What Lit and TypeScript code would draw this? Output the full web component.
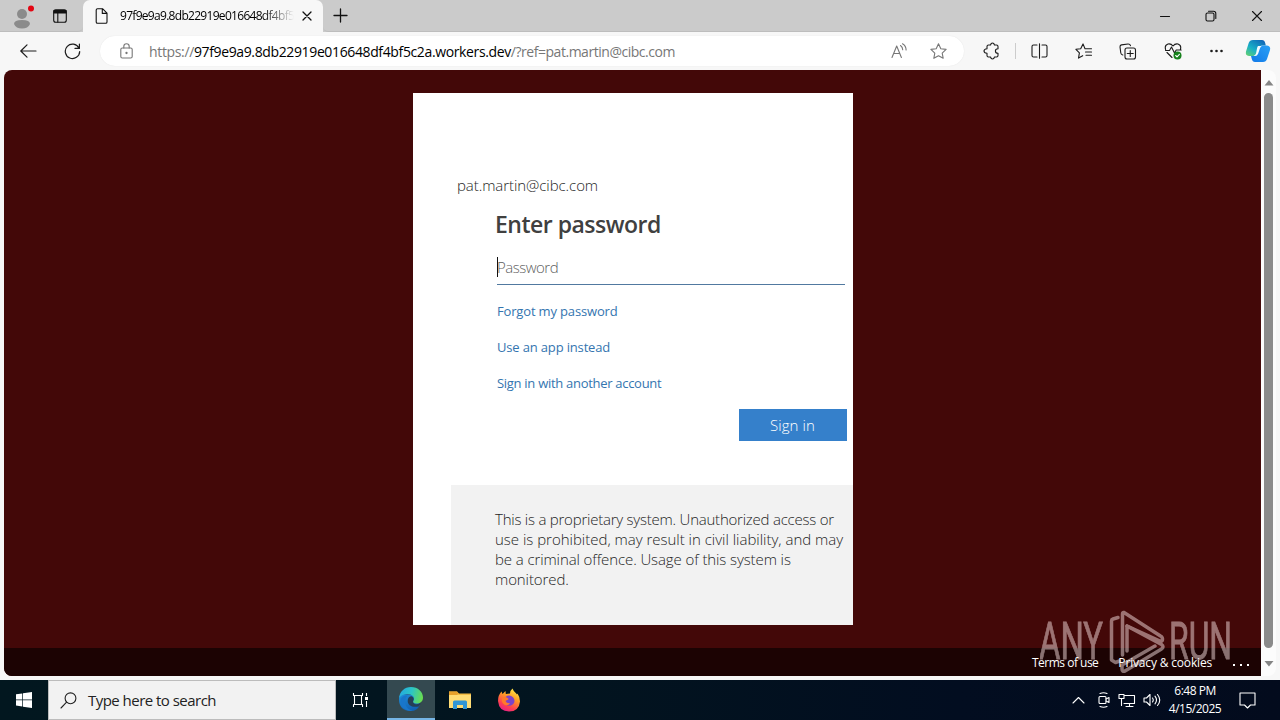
import { LitElement, html, css, svg } from "lit";
import { customElement } from "lit/decorators.js";

const icon = (w: number, h: number, body: unknown, cls = "") =>
  html`<svg class="ico ${cls}" width=${w} height=${h} viewBox="0 0 ${w} ${h}">${body}</svg>`;

const shared = css`
  * { box-sizing: border-box; }
  svg { display: block; flex: none; }
  .ico { fill: none; stroke: currentColor; stroke-width: 1.1; stroke-linecap: round; stroke-linejoin: round; }
`;

@customElement("browser-tabs")
class BrowserTabs extends LitElement {
  static styles = [shared, css`
    :host { display: flex; height: 32px; background: #cbcbcb; color: #111; }
    .left { width: 83px; display: flex; align-items: center; padding-left: 12px; gap: 17px; border-bottom: 1px solid #bdbdbd; border-radius: 0 0 5px 0; }
    .tab { width: 240px; display: flex; align-items: center; background: #f7f7f7; border-radius: 7px 7px 0 0; padding-left: 12px; }
    .title { margin-left: 12px; width: 174px; overflow: hidden; white-space: nowrap; font-size: 12px; line-height: 18px; padding-bottom: 1px; letter-spacing: -0.7px; color: #000;
      -webkit-mask-image: linear-gradient(90deg, #000 82%, transparent); mask-image: linear-gradient(90deg, #000 82%, transparent); }
    .close { margin-left: 8px; }
    .rest { flex: 1; display: flex; align-items: center; padding-left: 10px; border-bottom: 1px solid #bdbdbd; border-radius: 0 0 0 5px; }
    .window { margin-left: auto; display: flex; align-items: center; gap: 34px; padding-right: 17px; }
  `];
  render() {
    return html`
      <div class="left">
        ${icon(24, 28, svg`<circle cx="10" cy="12" r="5" fill="#8b8b8b" stroke="none"/><path d="M2 22q0-4 8-4t8 4q-2 4.500-8 4.500T2 22z" fill="#8b8b8b" stroke="none"/><circle cx="19" cy="6.500" r="3" fill="#e30613" stroke="none"/>`)}
        ${icon(15, 14, svg`<rect x=".7" y=".7" width="12.600" height="12.600" rx="2"/><path d="M1 1.500h12v2.500H1z" fill="currentColor"/><path d="M4.800 4v9"/>`)}
      </div>
      <div class="tab">
        ${icon(13, 16, svg`<path d="M2.500 .7h5L12 5.200V14q0 1.300-1.300 1.300H2.500Q1.200 15.300 1.200 14V2Q1.200 .7 2.500 .7zM7.300 1v4.400H12"/>`)}
        <span class="title">97f9e9a9.8db22919e016648df4bf5c2a</span>
        <span class="close">${icon(10, 10, svg`<path d="M1 1l8 8M9 1l-8 8" stroke-width="1.300"/>`)}</span>
      </div>
      <div class="rest">
        ${icon(15, 15, svg`<path d="M7.500 1v13M1 7.500h13" stroke-width="1.300"/>`)}
        <div class="window">
          ${icon(12, 12, svg`<path d="M1.500 6.500h9"/>`)}
          ${icon(12, 12, svg`<rect x="1" y="3" width="8" height="8" rx="1.500"/><path d="M3.500 1.200h5q2.300 0 2.300 2.300v5"/>`)}
          ${icon(12, 12, svg`<path d="M1.500 1.500l9 9M10.500 1.500l-9 9"/>`)}
        </div>
      </div>`;
  }
}

@customElement("browser-toolbar")
class BrowserToolbar extends LitElement {
  static styles = [shared, css`
    :host { display: flex; align-items: center; height: 38px; background: #f7f7f7; color: #1c1c1c; padding-left: 20px; }
    .reload { margin-left: 27px; }
    .address { margin-left: 19px; width: 864px; height: 30px; border-radius: 15px; background: #fff; display: flex; align-items: center; padding: 0 17px 0 20px; color: #777; box-shadow: 0 0 1px #ddd; }
    .url { margin-left: 16px; font-size: 14px; white-space: nowrap; letter-spacing: -0.35px; }
    .url b { font-weight: 400; color: #000; letter-spacing: -0.37px; }
    .query { letter-spacing: -0.47px; }
    .tools { margin-left: auto; display: flex; gap: 22px; }
    .actions { margin-left: 19px; display: flex; align-items: center; }
    .sep { width: 1px; height: 16px; background: #ccc; margin: 0 15px 0 14px; }
    .group { display: flex; gap: 26.500px; align-items: center; }
    .copilot { margin-left: 21px; }
  `];
  render() {
    return html`
      ${icon(17, 14, svg`<path d="M7 .8L.8 7 7 13.200M1 7h15" stroke-width="1.200"/>`)}
      ${icon(17, 17, svg`<path d="M15 5.200A7.200 7.200 0 1 0 15.700 8.500M15.400 1v4.400H11" stroke-width="1.200"/>`, "reload")}
      <div class="address">
        ${icon(13, 16, svg`<rect x=".8" y="5" width="11.400" height="10" rx="1.500"/><path d="M3.800 5V3.500a2.700 2.700 0 0 1 5.400 0V5"/><circle cx="6.500" cy="10" r=".6" fill="currentColor"/>`)}
        <span class="url">https://<b>97f9e9a9.8db22919e016648df4bf5c2a.workers.dev</b><span class="query">/?ref=pat.martin@cibc.com</span></span>
        <div class="tools">
          ${icon(17, 16, svg`<path d="M1 14.500L5.700 3l4.700 11.500M2.800 10.500h6M9.500 2.500q2.200 1.500 2.200 4.300M11.500 .8q3.600 2.200 3.600 6.200"/>`)}
          ${icon(17, 16, svg`<path d="M8.500 .8l2.300 4.900 5.300.7-3.900 3.700 1 5.200-4.700-2.600-4.700 2.600 1-5.200L.9 6.400l5.300-.7z"/>`)}
        </div>
      </div>
      <div class="actions">
        ${icon(18, 18, svg`<path d="M5.500 3h2Q8 1 9.500 1T11.500 3h2q1.500 0 1.500 1.500v2.200q-2.600 0-2.600 2.300T15 11.300v2.200q0 1.500-1.500 1.500h-2Q11 17 9.500 17T7.500 15h-2Q4 15 4 13.500v-2.200Q1 11 1 9t3-2.300V4.500Q4 3 5.500 3z"/>`)}
        <span class="sep"></span>
        <div class="group">
          ${icon(17, 16, svg`<path d="M6 2H2.500Q1 2 1 3.500v9Q1 14 2.500 14H6M11 2h3.500Q16 2 16 3.500v9q0 1.500-1.500 1.500H11M8.500 .8v14.400"/>`)}
          ${icon(18, 16, svg`<path d="M10 5.700L8 .9 5.700 5.700.9 6.300l3.500 3.600-.9 5.200 4.200-2.400M10 5.700h6.500M10.500 9h6M11 12.300h5.500"/>`)}
          ${icon(18, 17, svg`<rect x="6" y="5" width="10.500" height="11" rx="2"/><path d="M11.250 7.500v6M8.250 10.500h6M3.800 12Q2 11.500 1.800 10L1 4Q.9 2.200 2.500 1.900L9 1q2-.1 2.500 1.700"/>`)}
          ${icon(19, 18, svg`<path d="M1.600 7.500Q.3 3.200 4 2q3-.6 5 2 2-2.600 5-2 3.700 1.200 2.400 5.500M1.500 8.500h4L7.500 5l3 6 1.700-3h5M3 10.500l5 5"/><circle cx="13.500" cy="13.500" r="4" fill="#16811c" stroke="none"/><path d="M11.700 13.500l1.300 1.300 2.400-2.500" stroke="#fff"/>`)}
          ${icon(15, 16, svg`<g fill="currentColor" stroke="none"><circle cx="2.500" cy="8" r="1.300"/><circle cx="7.500" cy="8" r="1.300"/><circle cx="12.500" cy="8" r="1.300"/></g>`)}
        </div>
        <svg class="copilot" width="26" height="24" viewBox="0 0 26 24">
          <defs>
            <linearGradient id="a" x1="0" y1="1" x2=".8" y2="0"><stop stop-color="#69d36b"/><stop offset=".45" stop-color="#19afc7"/><stop offset="1" stop-color="#1167b7"/></linearGradient>
            <linearGradient id="b" x1="0" y1="1" x2="1" y2="0"><stop stop-color="#1279e8"/><stop offset="1" stop-color="#29a0f5"/></linearGradient>
          </defs>
          <path d="M8 1h9q2.500 0 3.200 3l.6 2.500h-4q-2.300 0-3 2.500l-1.700 5.500Q11 17 8.500 17H4q-4-.5-3-4.500L3.700 4Q4.700 1 8 1z" fill="url(#a)"/>
          <path d="M18 23H10q-2.500 0-3.200-3L6 17h3q2.300 0 3-2.500L13.700 9q1-2.500 3.300-2.500h5q4 .5 3 4.500L22 20q-1 3-4 3z" fill="url(#b)"/>
          <path d="M13 7h3.700q-1.400 1-2 3l-1.500 4.500q-.8 2.500-3.500 2.500H8.500q1.900-.6 2.500-2.500l1-5q.3-1.700 1-2.500z" fill="#f4fbff"/>
        </svg>
      </div>`;
  }
}

@customElement("sign-in-page")
class SignInPage extends LitElement {
  static styles = [shared, css`
    :host { display: flex; flex: 1; height: 610px; background: #f7f7f7; padding: 0 4px 4px; }
    .view { position: relative; width: 1257px; height: 606px; background: #430808; border-radius: 8px 0 0 8px; overflow: hidden; display: flex; flex-direction: column; padding-top: 23px; }
    .card { width: 440px; height: 532px; margin-left: 409px; background: #fff; color: #404040; font-size: 15px; padding-top: 82px; display: flex; flex-direction: column; white-space: nowrap; }
    .user { margin-left: 44px; line-height: 20px; letter-spacing: -0.07px; font-weight: 300; color: #1e1e1e; }
    h1 { margin: 14px 0 0 82px; font-size: 23px; line-height: 30px; font-weight: 600; letter-spacing: -0.5px; color: #404040; }
    .field { margin: 13px 8px 0 84px; height: 33px; border-bottom: 1px solid #5179a0; display: flex; align-items: center; padding-bottom: 3px; color: #606060; font-weight: 300; letter-spacing: -0.5px; }
    .caret { width: 1px; height: 20px; background: #111; margin-right: -1px; }
    .links { display: flex; flex-direction: column; margin: 16px 0 0 84px; gap: 16px; font-size: 13px; line-height: 20px; color: #3475af; letter-spacing: -0.16px; }
    .other { letter-spacing: -0.29px; }
    .submit { align-self: flex-end; margin: 16px 6px 0 0; width: 108px; height: 32px; background: #3580cb; color: #fff; display: flex; align-items: center; justify-content: center; letter-spacing: 0.1px; font-weight: 300; padding-right: 1px; }
    .notice { margin: 44px 0 0 38px; flex: 1; background: #f2f2f2; padding: 24px 0 0 44px; line-height: 20px; letter-spacing: -0.1px; color: #1e1e1e; font-weight: 300; display: flex; flex-direction: column; }
    .tight { letter-spacing: -0.23px; }
    .loose { letter-spacing: -0.01px; }
    .foot { margin-top: auto; height: 28px; background: #1c0303; display: flex; align-items: center; justify-content: flex-end; color: #fff; font-size: 12px; gap: 20px; padding-right: 12px; white-space: nowrap; }
    .foot span { position: relative; z-index: 1; }
    .dots { display: flex; gap: 5px; margin: 5px 0 0 1px; }
    .dots i { width: 2px; height: 2px; background: #fff; }
    .terms { letter-spacing: -0.5px; }
    .privacy { letter-spacing: -0.17px; }
    .mark { position: absolute; right: 25px; bottom: 0; opacity: .5; }
    .mark text { font-family: Roboto, sans-serif; font-weight: 400; font-size: 52px; fill: #f5dede; stroke: #f5dede; stroke-width: .8; }
    .scroll { width: 15px; background: #fcfcfc; border-radius: 0 8px 8px 0; display: flex; flex-direction: column; align-items: center; padding-top: 10px; gap: 7px; }
    .thumb { width: 9px; height: 555px; border-radius: 5px; background: #8b8b8b; }
    .down { margin-top: 6px; }
  `];
  render() {
    return html`
      <div class="view">
        <div class="card">
          <div class="user">pat.martin@cibc.com</div>
          <h1>Enter password</h1>
          <div class="field"><span class="caret"></span>Password</div>
          <div class="links"><span>Forgot my password</span><span>Use an app instead</span><span class="other">Sign in with another account</span></div>
          <div class="submit">Sign in</div>
          <div class="notice">
            <span class="tight">This is a proprietary system. Unauthorized access or</span>
            <span class="loose">use is prohibited, may result in civil liability, and may</span>
            <span>be a criminal offence. Usage of this system is</span>
            <span>monitored.</span>
          </div>
        </div>
        <div class="foot"><span class="terms">Terms of use</span><span class="privacy">Privacy &amp; cookies</span><span class="dots"><i></i><i></i><i></i></span></div>
        <svg class="mark" width="196" height="70" viewBox="0 0 196 70">
          <text x="-1" y="53" textLength="64" lengthAdjust="spacingAndGlyphs">ANY</text>
          <text x="129" y="53" textLength="63" lengthAdjust="spacingAndGlyphs">RUN</text>
          <g fill="none" stroke="#f5dede" stroke-width="3.500" stroke-linejoin="round" stroke-linecap="round">
            <path d="M78 11.500l-5 1.500q-1.500.5-1.500 2V54l4 2.500 4-1.500"/>
            <path d="M87 20l34 15.500q1.500-.5 1.500-2.500t-2-3L84 6.500q-1.500-.5-1.500 1.500v41"/>
            <path d="M87 20v25M87 20l34.500 18.500q3 2 0 4.500L85 65q-3 1-3-2v-4L115 40"/>
          </g>
        </svg>
      </div>
      <div class="scroll">
        <svg width="10" height="6"><path d="M5 0l4.500 5.500h-9z" fill="#858585"/></svg>
        <span class="thumb"></span>
        <svg class="down" width="10" height="6"><path d="M5 5.500L.5 0h9z" fill="#858585"/></svg>
      </div>`;
  }
}

@customElement("task-bar")
class TaskBar extends LitElement {
  static styles = [shared, css`
    :host { display: flex; height: 40px; background: linear-gradient(90deg, #02171f 0, #02141f 45%, #020d20 75%, #030b1d); color: #fff; }
    .start, .btn { width: 48px; display: flex; align-items: center; justify-content: center; }
    .search { width: 288px; background: #f2f2f2; border: 1px solid #bcbcbc; color: #222; display: flex; align-items: center; padding-left: 11px; gap: 11px; font-size: 15px; letter-spacing: -0.53px; white-space: nowrap; }
    .btn + .btn { margin-left: 1px; }
    .btn.active { margin-left: 3px; background: #344950; border-bottom: 2px solid #76b5e5; }
    .tray { margin-left: auto; display: flex; align-items: center; gap: 7px; padding-right: 24px; }
    .clock { width: 54px; text-align: center; font-size: 12px; line-height: 18px; letter-spacing: -0.5px; white-space: nowrap; }
    .up { margin-right: 4px; }
    .note { margin-left: 10px; }
  `];
  render() {
    return html`
      <div class="start"><svg width="16" height="16" viewBox="0 0 16 16" fill="#fff"><path d="M0 2.300l6.300-.9v6.200H0zM7 1.300L16 0v7.600H7zM0 8.300h6.300v6.200L0 13.600zM7 8.300h9V16l-9-1.300z"/></svg></div>
      <div class="search">${icon(17, 17, svg`<circle cx="10.500" cy="6.300" r="5.400"/><path d="M6.600 10.200L1 16"/>`)}<span>Type here to search</span></div>
      <div class="btn">${icon(17, 16, svg`<path d="M1.500 1v2.500h9V1M1.500 15v-2.500h9V15M2.500 3.500v9M9.500 3.500v9M14.500 1v3M14.500 9v6" stroke-linecap="butt"/><path d="M13 5h3v3h-3z" fill="#fff" stroke="none"/>`)}</div>
      <div class="btn active"><svg width="24" height="24" viewBox="0 0 24 24">
        <defs><linearGradient id="e" x1="0" y1=".3" x2="1" y2=".5"><stop stop-color="#24a9e0"/><stop offset=".5" stop-color="#2cc5c6"/><stop offset="1" stop-color="#69dd50"/></linearGradient>
        <linearGradient id="f" x1="0" y1="0" x2=".6" y2="1"><stop stop-color="#1f8fdb"/><stop offset="1" stop-color="#1160b4"/></linearGradient></defs>
        <path d="M0 12Q0 8 4 7l12 1 5 10q-3 6-9 6Q0 24 0 12z" fill="url(#f)"/>
        <path d="M0 11.500C.5 4.500 5.500 0 12 0c7 0 12 5 12 10.500 0 4-3 6-6.500 6-3 0-4-1.300-3.300-2.300C17 10 12.500 7 8.500 7 4.500 7 1 9 0 11.500z" fill="url(#e)"/>
        <path d="M8.700 14c0-3 1.500-4.800 4-4.800 1.500.8 2.300 2 2 3.600-1.700 2.700.3 4.500 3 4.500 1.800 0 3-.5 4.200-1.200-.6 1.700-1.400 2.700-2.200 3.300C13 21 8.700 18 8.700 14z" fill="#263f57"/>
        <path d="M6.500 12.500c-1.500 6 2.500 10.500 7.500 11.200-7 1-13-4-12.500-10C2 10 5 8 9 8.500c-1.500 1-2.200 2.300-2.500 4z" fill="#1976cb"/>
      </svg></div>
      <div class="btn"><svg width="22" height="20" viewBox="0 0 22 20"><path d="M0 1.500h8l2 2h12V18H0z" fill="#f5bd45"/><path d="M0 5h22v13H0z" fill="#ffdc75"/><path d="M0 1.500h8l1.500 2L8 5H0z" fill="#e7a12c"/><path d="M4 19v-7q0-1.500 1.500-1.500h11Q18 10.500 18 12v7h-4v-4H8v4z" fill="#3296d5"/></svg></div>
      <div class="btn"><svg width="24" height="24" viewBox="0 0 24 24">
        <defs><linearGradient id="g" x1=".8" y1="0" x2=".3" y2="1"><stop stop-color="#fff04a"/><stop offset=".4" stop-color="#ff9a25"/><stop offset=".75" stop-color="#ff4050"/><stop offset="1" stop-color="#e52087"/></linearGradient></defs>
        <path d="M1 13q0-6 3.500-9.500L5.500 6l3-3 .3 3L13 5.500Q13 2.500 15.500 .5q1 3 3.500 4.700l1 1.300.5-1Q23 9 23 13.500 22 23.500 12 23.500T1 13z" fill="url(#g)"/>
        <path d="M8.500 9q4-3 7.500.3 3 3.700 0 7-4 3-7.300.2-2-2.500-.5-4.200 2-.5 3.300-1.300-2.800 0-3-2z" fill="#7d43c9"/><path d="M5 10q3-2 5.500 0l1.200 1-3.200 2q1 2.500 4.500 2.200-2 3.300-5.500 1.500T5 10z" fill="#ff7a2a"/>
      </svg></div>
      <div class="tray">
        ${icon(13, 8, svg`<path d="M1 7l5.500-5.500L12 7"/>`, "up")}
        ${icon(15, 18, svg`<rect x="3" y="5.500" width="7" height="7" rx="1"/><path d="M10 8l3-1.500v5L10 10M4 2.500q3.500-1.500 7 0M4 15.500q3.500 1.500 7 0"/>`)}
        ${icon(18, 16, svg`<path d="M7 3.500h9.500v8H6M11.500 11.500V14M8 14.500h7M1 2.500h5v4H1zM3.500 6.500v7"/>`)}
        ${icon(18, 16, svg`<path d="M1 6h2.500L7 2.500v11L3.500 10H1zM9.500 6q1.500 2 0 4M12 4.200q3 3.800 0 7.600M14.500 2.500q4.500 5.500 0 11"/>`)}
        <div class="clock"><div>6:48 PM</div><div>4/15/2025</div></div>
        ${icon(17, 17, svg`<path d="M1 1h15v12h-4.500l-3 3-3-3H1z"/>`, "note")}
      </div>`;
  }
}

@customElement("app-root")
class AppRoot extends LitElement {
  static styles = css`
    :host { display: flex; flex-direction: column; width: 1280px; height: 720px; overflow: hidden; font-family: "Open Sans", "Noto Sans", sans-serif; }
  `;
  render() {
    return html`<browser-tabs></browser-tabs><browser-toolbar></browser-toolbar><sign-in-page></sign-in-page><task-bar></task-bar>`;
  }
}
